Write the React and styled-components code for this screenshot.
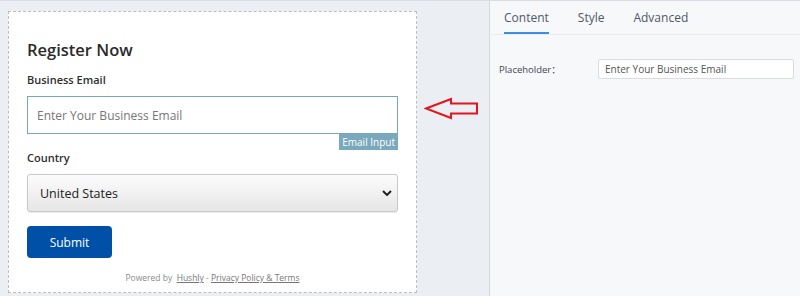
import styled, { createGlobalStyle } from "styled-components";

const GlobalStyle = createGlobalStyle`
  html, body {
    margin: 0;
    padding: 0;
    background: #fff;
    font-family: "Open Sans", "Noto Sans", sans-serif;
  }
`;

const App = () => {
  return (
    <>
      <GlobalStyle />
      <Page>
        <Canvas>
          <FormCard>
            <Title>Register Now</Title>
            <Label>Business Email</Label>
            <Field>
              <EmailInput placeholder="Enter Your Business Email" />
              <Tag>Email Input</Tag>
            </Field>
            <Label>Country</Label>
            <SelectWrap>
              <Select defaultValue="us">
                <option value="us">United States</option>
              </Select>
              <Chevron viewBox="0 0 10 6" width="10" height="6">
                <path d="M1 1l4 4 4-4" fill="none" stroke="#222" strokeWidth="2" />
              </Chevron>
            </SelectWrap>
            <SubmitBtn>Submit</SubmitBtn>
            <Powered>
              Powered by&nbsp; <a>Hushly</a> - <a>Privacy Policy &amp; Terms</a>
            </Powered>
          </FormCard>
          <Arrow viewBox="0 0 55 23" width="55" height="23">
            <polygon
              points="2,11.5 27,2 27,6.5 53,6.5 53,16.5 27,16.5 27,21"
              fill="none"
              stroke="#e5141d"
              strokeWidth="2"
            />
          </Arrow>
        </Canvas>
        <Panel>
          <Tabs>
            <TabItem active>Content</TabItem>
            <TabItem>Style</TabItem>
            <TabItem>Advanced</TabItem>
          </Tabs>
          <PropRow>
            <PropLabel>Placeholder：</PropLabel>
            <PropInput defaultValue="Enter Your Business Email" />
          </PropRow>
        </Panel>
      </Page>
    </>
  );
};

export default App;

const Page = styled.div`
  display: flex;
  width: 800px;
  height: 296px;
  border-top: 1px solid #dadde3;
  box-sizing: border-box;
  overflow: hidden;
`;

const Canvas = styled.div`
  width: 489px;
  flex-shrink: 0;
  background: #ebeef3;
  display: flex;
  align-items: flex-start;
  padding: 10px 0 0 8px;
  box-sizing: border-box;
`;

const FormCard = styled.div`
  width: 409px;
  height: 282px;
  box-sizing: border-box;
  background: #fff;
  border: 1px dashed #bdbdbd;
  padding: 26px 18px 0;
  display: flex;
  flex-direction: column;
  align-items: flex-start;
`;

const Title = styled.h2`
  margin: 0 0 10px;
  font-size: 16.5px;
  line-height: 24px;
  font-weight: 600;
  color: #2b2b2b;
`;

const Label = styled.label`
  font-size: 11px;
  line-height: 16px;
  font-weight: 600;
  color: #2e2e2e;
  margin-bottom: 8px;
`;

const Field = styled.div`
  width: 100%;
  display: flex;
  flex-direction: column;
`;

const EmailInput = styled.input`
  width: 100%;
  height: 38px;
  box-sizing: border-box;
  border: 1px solid #7aa7bb;
  padding: 0 9px;
  font-family: inherit;
  font-size: 12px;
  color: #333;
  outline: none;
  &::placeholder {
    color: #767676;
  }
`;

const Tag = styled.span`
  align-self: flex-end;
  background: #7aa8bd;
  color: #fff;
  font-size: 10px;
  line-height: 16px;
  padding: 0 3px;
`;

const SelectWrap = styled.div`
  position: relative;
  width: 100%;
  margin-bottom: 14px;
`;

const Select = styled.select`
  width: 100%;
  height: 38px;
  box-sizing: border-box;
  appearance: none;
  border: 1px solid #c8c8c8;
  border-radius: 3px;
  background: linear-gradient(to bottom, #fcfcfc 0%, #e6e6e6 100%);
  padding: 0 12px;
  font-family: inherit;
  font-size: 12.5px;
  color: #222;
  box-shadow: 0 1px 1px rgba(0, 0, 0, 0.08);
`;

const Chevron = styled.svg`
  position: absolute;
  right: 6px;
  top: 16px;
  pointer-events: none;
`;

const SubmitBtn = styled.button`
  width: 85px;
  height: 32px;
  border: none;
  border-radius: 4px;
  background: #0050a7;
  color: #fff;
  font-family: inherit;
  font-size: 12px;
  padding: 0;
  margin-bottom: 14px;
`;

const Powered = styled.div`
  align-self: center;
  font-size: 8.5px;
  line-height: 12px;
  color: #8a8a8a;
  a {
    color: #777;
    text-decoration: underline;
  }
`;

const Arrow = styled.svg`
  margin: 86px 0 0 7px;
`;

const Panel = styled.div`
  flex: 1;
  background: #f7f8fa;
  border-left: 1px solid #d4d8de;
  display: flex;
  flex-direction: column;
`;

const Tabs = styled.div`
  display: flex;
  gap: 29px;
  height: 33px;
  padding-left: 14px;
  border-bottom: 1px solid #eaecf0;
`;

const TabItem = styled.div`
  font-size: 12px;
  line-height: 33px;
  color: #4e5868;
  box-sizing: border-box;
  border-bottom: 2px solid ${(p) => (p.active ? "#3a8ee6" : "transparent")};
`;

const PropRow = styled.div`
  display: flex;
  align-items: center;
  margin-top: 24px;
  padding: 0 6px 0 9px;
`;

const PropLabel = styled.span`
  width: 99px;
  flex-shrink: 0;
  font-family: "Open Sans", "Noto Sans CJK SC", sans-serif;
  font-size: 9.5px;
  color: #3f4552;
`;

const PropInput = styled.input`
  flex: 1;
  height: 20px;
  box-sizing: border-box;
  border: 1px solid #d9dce2;
  border-radius: 2px;
  background: #fff;
  padding: 0 6px;
  font-family: inherit;
  font-size: 10px;
  color: #555;
  outline: none;
`;
